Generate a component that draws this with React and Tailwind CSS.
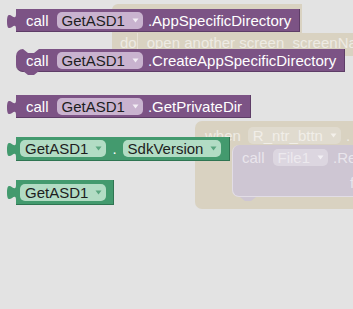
import React from "react";

const font = { fontFamily: '"Liberation Sans", Arial, sans-serif' };

function Arrow({ color }) {
  return (
    <svg width="7" height="5" viewBox="0 0 7 5" className="shrink-0">
      <path d="M0.5 0.5 H6.5 L3.5 4.5 Z" fill={color} />
    </svg>
  );
}

function Pill({ label, tone = "purple" }) {
  const styles = {
    purple: "bg-[#c9b3cf] text-[#1e1e1e]",
    green: "bg-[#b2dcc4] text-[#1e1e1e]",
    ghost: "bg-[#e0dbcf] text-[#f1eee8]",
    ghostPurple: "bg-[#dcd6e0] text-[#ece9ee]",
  };
  const arrows = { purple: "#f3eef5", green: "#5aa57f", ghost: "#f3f0ea", ghostPurple: "#f2eff4" };
  return (
    <div className={`flex items-center h-[17px] rounded-[5px] pl-[5px] pr-[4px] gap-[7px] ${styles[tone]}`}>
      <span className="text-[15px] leading-none">{label}</span>
      <Arrow color={arrows[tone]} />
    </div>
  );
}

function OutputTab({ color }) {
  return (
    <svg width="9" height="22" viewBox="0 0 9 22" className="absolute -left-[9px] top-0">
      <path d="M9 3 v2 c0 10 -9 -8 -9 7.5 s9 -2.5 9 7.5 v0 Z" fill={color} />
    </svg>
  );
}

function CallBlock({ left, top, method, statement }) {
  return (
    <div
      className={`absolute flex items-center h-[23px] bg-[#7c5385] border-b border-r border-[#5e3d67] pl-[10px] pr-[8px] ${statement ? "rounded-l-[7px]" : ""}`}
      style={{ left, top }}
    >
      {statement ? (
        <>
          <svg width="16" height="4" viewBox="0 0 16 4" className="absolute left-[7px] top-0">
            <path d="M0 0 L5 4 H11 L16 0 Z" fill="#e3e3e3" />
          </svg>
          <svg width="16" height="4" viewBox="0 0 16 4" className="absolute left-[7px] -bottom-[4px]">
            <path d="M0 0 L5 4 H11 L16 0 Z" fill="#7c5385" />
          </svg>
        </>
      ) : (
        <OutputTab color="#7c5385" />
      )}
      <span className="text-[15px] text-white leading-none mr-[8px]">call</span>
      <Pill label="GetASD1" />
      <span className="text-[15px] text-white leading-none ml-[5px]">{method}</span>
    </div>
  );
}

export default function App() {
  return (
    <div className="relative w-[353px] h-[309px] bg-[#e3e3e3] overflow-hidden" style={font}>
      {/* ghost block behind top blocks */}
      <div className="absolute left-[112px] top-[4px] w-[190px] h-[30px] bg-[#d9d2c1] rounded-tl-[6px]" />
      <div className="absolute left-[112px] top-[33px] w-[260px] h-[23px] bg-[#d9d2c1] flex">
        <span className="text-[15px] text-[#eeebe4] pl-[8px] pt-[1px] leading-[17px] w-[36px]">do</span>
        <div className="border-l border-[#e6e1d6] pl-[9px] pt-[1px] text-[15px] leading-[17px] text-[#eeebe4] whitespace-nowrap">
          open another screen&nbsp; screenName
        </div>
      </div>

      <CallBlock left={16} top={9} method=".AppSpecificDirectory" />
      <CallBlock left={16} top={49} method=".CreateAppSpecificDirectory" statement />
      <CallBlock left={16} top={95} method=".GetPrivateDir" />

      {/* ghost "when" event block */}
      <div className="absolute left-[195px] top-[121px] w-[190px] h-[88px] bg-[#d9d2c1] rounded-[7px]">
        <div className="flex items-center h-[20px] mt-[4px] pl-[10px] gap-[7px]">
          <span className="text-[15px] text-[#eeebe4] leading-none">when</span>
          <Pill label="R_ntr_bttn" tone="ghost" />
          <span className="text-[15px] text-[#eeebe4] leading-none -ml-[2px]">.</span>
        </div>
        <div className="absolute left-[37px] top-[24px] w-[160px] h-[52px] bg-[#cec6d3] border-l border-b border-[#e2dde6] rounded-l-[7px]">
          <div className="flex items-center h-[20px] mt-[2px] pl-[9px]">
            <span className="text-[15px] text-[#e9e5ec] leading-none mr-[8px]">call</span>
            <Pill label="File1" tone="ghostPurple" />
            <span className="text-[15px] text-[#e9e5ec] leading-none ml-[5px]">.Re</span>
          </div>
          <span className="absolute left-[117px] top-[30px] text-[15px] text-[#e9e5ec] leading-none">f</span>
          <svg width="16" height="4" viewBox="0 0 16 4" className="absolute left-[7px] -bottom-[5px]">
            <path d="M0 0 L5 4 H11 L16 0 Z" fill="#cec6d3" />
          </svg>
        </div>
      </div>

      {/* green property getter */}
      <div className="absolute left-[16px] top-[137px] flex items-center h-[24px] bg-[#439a6e] border-b border-r border-[#2f7552] pl-[4px] pr-[8px]">
        <OutputTab color="#439a6e" />
        <Pill label="GetASD1" tone="green" />
        <span className="text-[15px] text-white leading-none mx-[6px]">.</span>
        <Pill label="SdkVersion" tone="green" />
      </div>

      <div className="absolute left-[16px] top-[180px] flex items-center h-[25px] bg-[#439a6e] border-b border-r border-[#2f7552] pl-[4px] pr-[7px]">
        <OutputTab color="#439a6e" />
        <Pill label="GetASD1" tone="green" />
      </div>
    </div>
  );
}
